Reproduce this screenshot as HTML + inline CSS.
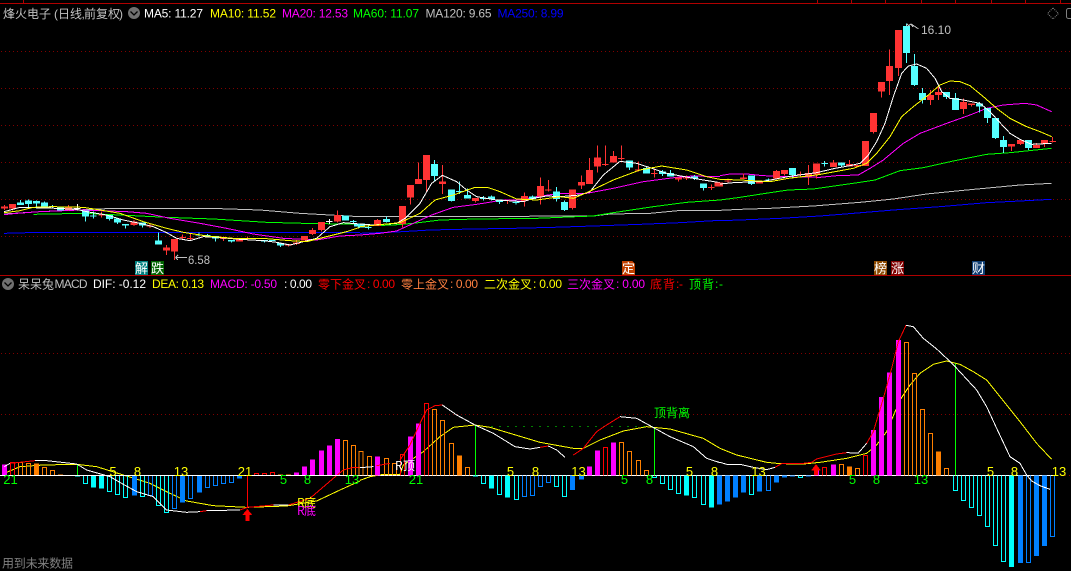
<!DOCTYPE html>
<html><head><meta charset="utf-8"><title>烽火电子</title>
<style>
html,body{margin:0;padding:0;background:#000;width:1071px;height:571px;overflow:hidden}
svg{display:block}
text{font-family:"Liberation Sans","WenQuanYi Zen Hei","Noto Sans CJK SC",sans-serif;font-size:12px}
.c{font-family:"WenQuanYi Zen Hei","Noto Sans CJK SC",sans-serif;font-size:12px}
.k{font-family:"WenQuanYi Zen Hei","Noto Sans CJK SC",sans-serif;font-size:13px}
.n{font-size:13px;text-anchor:middle}
path,polyline{fill:none;shape-rendering:crispEdges}
polyline{stroke-width:3}
.r{stroke:#ff3333}.y{stroke:#5ff}
.b{stroke-width:21}.w{stroke-width:3}
.f{stroke-width:15}.h{stroke-width:3}
</style></head><body>
<svg width="1071" height="571" viewBox="0 0 1071 571" xmlns="http://www.w3.org/2000/svg">
<defs><pattern id="d" width="4" height="1" patternUnits="userSpaceOnUse"><rect x="1" width="1" height="1" fill="#800000"/></pattern></defs>
<rect width="1071" height="571" fill="#000"/>
<!-- borders -->
<g fill="#b00000">
<rect x="0" y="3" width="1071" height="1"/><rect x="0" y="275" width="1071" height="1"/>
<rect x="23" y="0" width="1" height="3"/><rect x="817" y="0" width="1" height="3"/><rect x="851" y="0" width="1" height="3"/><rect x="885" y="0" width="1" height="3"/><rect x="921" y="0" width="1" height="3"/><rect x="955" y="0" width="1" height="3"/><rect x="991" y="0" width="1" height="3"/><rect x="1025" y="0" width="1" height="3"/><rect x="1060" y="0" width="1" height="3"/>
</g>
<!-- grid -->
<g fill="url(#d)">
<rect y="51" width="1071" height="1"/><rect y="88" width="1071" height="1"/><rect y="125" width="1071" height="1"/><rect y="162" width="1071" height="1"/><rect y="199" width="1071" height="1"/><rect y="236" width="1071" height="1"/><rect y="353" width="1071" height="1"/><rect y="414" width="1071" height="1"/><rect x="1053" y="475" width="18" height="1"/>
</g>

<!-- upper panel part 1 -->
<g transform="scale(.33333)">
<polyline stroke="#0000ff" points="12,700 120,697 1080,697"/>
<polyline stroke="#c0c0c0" points="12,642 120,635 320,626 660,626 780,630 900,640 1080,650"/>
<polyline stroke="#00ff00" points="100,643 250,640 360,645 500,652 640,657 800,667 950,671 1080,672"/>
<polyline stroke="#ff00ff" points="12,644 50,640 120,635 240,630 300,632 380,635 440,640 510,655 600,670 680,685 760,702 850,715 950,720 1020,708 1080,705"/>
<path class="w r" d="M13 615V630M37 612V632M205 615V632M305 635V652M402 660V678M450 670V684M500 735V765M523 717V780M548 703V720M571 700V720M670 710V723M742 710V722M865 732V740M889 720V735M937 684V705M964 666V695M1012 632V668M295 645h20M440 678h20M490 748h20M538 712h20M561 715h20M660 716h20M732 716h20"/>
<path class="b r" d="M13 620V626M37 612V625M205 622V630M402 665V675M500 742V752M523 717V755M718 718V725M865 732V737M889 728V732M913 708V722M937 690V702M964 666V690M1012 645V665"/>
<path class="w y" d="M61 600V615M85 598V625M109 601V625M133 605V625M157 615V625M257 632V665M280 635V655M328 645V662M352 654V672M376 672V686M428 668V682M475 698V734M597 698V710M622 702V712M647 708V724M694 720V728M793 720V728M841 729V741M1060 660V672M147 620h20M270 648h20M587 705h20M612 707h20M807 722h20M1050 665h20"/>
<path class="b y" d="M61 608V615M85 602V612M109 603V610M133 608V622M181 620V632M257 632V650M328 645V657M352 656V668M376 672V677M428 668V677M475 722V734M647 708V716M694 720V725M793 720V724M841 729V737M1036 646V662M1072 670V680"/>
<path class="w" stroke="#fff" d="M232 612V632M222 626h20M988 657V672M978 665h20"/>
<polyline stroke="#fff" points="12,635 60,622 100,623 170,625 230,628 260,635 320,645 370,660 420,670 460,680 500,698 530,715 570,722 610,710 650,712 720,718 790,722 830,727 870,735 910,725 950,715 990,680 1030,668 1080,672"/>
<polyline stroke="#ffff00" points="12,638 60,632 100,622 160,620 250,622 300,630 360,640 430,665 500,685 550,697 620,708 700,715 800,716 870,722 920,725 980,710 1040,695 1080,682"/>
</g>

<!-- upper panel part 2 -->
<g transform="translate(360,0) scale(.33333)">
<polyline stroke="#0000ff" points="0,700 110,696 210,690 340,687 460,685 580,682 700,678 840,673 960,668 1080,661"/>
<polyline stroke="#c0c0c0" points="0,650 200,650 700,648 750,642 870,640 965,631 1080,631"/>
<polyline stroke="#00ff00" points="0,678 100,675 160,670 240,660 350,657 530,655 650,650 700,648 760,638 880,620 980,607 1080,600"/>
<polyline stroke="#ff00ff" points="0,705 60,700 110,693 160,670 215,645 280,622 350,613 430,600 480,600 530,590 600,580 680,580 760,565 850,545 950,532 1000,528 1080,530"/>
<path class="w r" d="M52 657V678M128 618V682M151 555V614M175 487V552M199 465V578M247 495V582M346 594V608M442 602V612M493 578V620M541 532V614M565 540V575M637 568V628M664 526V567M688 474V552M712 436V518M736 436V498M760 453V488M784 436V482M835 485V515M883 505V533M955 532V544M979 526V540M1054 553V570M432 602h20M555 570h20M726 494h20M774 476h20M825 510h20M873 520h20M969 534h20M1044 562h20"/>
<path class="b r" d="M52 660V678M128 618V672M151 555V593M175 537V552M199 465V540M247 545V552M346 594V603M493 588V603M541 558V590M637 568V624M664 546V557M688 510V552M712 472V500M760 468V488M955 532V538M1074 548V560"/>
<path class="w y" d="M25 675V688M80 650V668M223 480V545M274 568V605M298 545V582M322 565V595M370 588V602M394 586V602M418 598V612M468 600V613M517 586V600M589 561V605M613 602V633M808 481V510M859 500V521M907 510V528M931 510V530M1003 525V540M1030 550V572M15 682h20M288 575h20M360 595h20M458 608h20"/>
<path class="b y" d="M5 670V682M80 657V666M223 492V528M274 568V603M322 585V595M394 590V597M418 598V606M517 590V597M589 574V597M613 606V630M808 481V503M859 504V521M907 514V522M931 519V530M1003 530V536M1030 550V564"/>
<polyline stroke="#fff" points="0,672 40,675 110,670 135,655 180,610 215,550 247,526 290,545 320,570 350,590 410,600 490,605 520,595 560,588 600,590 660,585 690,575 730,525 780,484 830,490 870,503 920,520 1000,535 1080,548"/>
<polyline stroke="#ffff00" points="0,680 50,675 120,668 180,640 225,600 280,585 345,562 385,563 420,575 470,597 530,600 600,590 640,595 680,578 760,540 840,510 905,498 980,510 1040,530 1080,538"/>
</g>

<!-- upper panel part 3 -->
<g transform="translate(720,0) scale(.33333)">
<polyline stroke="#0000ff" points="0,662 60,660 180,655 300,648 400,640 520,630 660,620 800,608 900,603 995,598"/>
<polyline stroke="#c0c0c0" points="0,631 60,628 150,625 280,618 420,607 520,597 620,582 740,570 900,555 995,550"/>
<polyline stroke="#00ff00" points="0,600 60,592 150,578 205,570 280,567 350,557 420,547 465,540 540,512 610,503 700,483 800,463 870,458 995,445"/>
<polyline stroke="#ff00ff" points="0,527 30,522 80,522 130,527 210,530 300,532 350,527 415,525 450,505 490,480 550,430 600,400 680,370 750,345 800,325 850,315 915,310 950,315 995,335"/>
<path class="w r" d="M24 535V550M14 543h20M70 520V537M170 510V535M194 510V526M242 515V530M232 523h20M266 495V555M290 491V535M340 480V501M388 480V500M460 339V401M484 246V293M508 148V285M536 90V228M632 270V315M656 255V300M731 296V342M755 310V320M875 432V453M902 420V435M950 429V444M974 420V441M998 411V427M988 425h20"/>
<path class="b r" d="M-2 548V560M70 532V537M118 543V551M170 513V535M194 510V522M266 519V530M290 491V523M340 487V501M388 492V500M412 495V500M436 423V498M460 339V396M484 246V275M508 198V243M536 90V204M632 285V300M656 276V285M731 306V327M755 310V315M875 432V440M902 420V432M950 435V444M974 420V430"/>
<path class="w y" d="M94 527V555M218 504V535M314 483V500M304 491h20M364 487V503M560 70V189M584 162V258M608 264V310M680 276V297M707 279V330M779 306V338M803 324V369M827 354V417M851 408V459M926 420V450M146 535V545M136 540h20"/>
<path class="b y" d="M94 527V552M218 504V525M364 487V497M560 78V159M584 198V255M608 279V300M680 276V291M707 294V330M779 310V320M803 324V354M827 354V414M851 420V441M926 420V444"/>
<polyline stroke="#fff" points="0,552 40,548 130,544 215,528 290,518 345,505 390,497 420,490 445,465 470,425 495,370 520,290 545,220 565,198 590,192 620,205 645,235 665,275 690,295 730,300 780,310 810,335 840,368 870,400 900,418 935,433 995,430"/>
<polyline stroke="#ffff00" points="0,538 60,540 150,545 205,535 290,525 345,515 400,505 440,490 470,460 510,410 545,350 580,320 625,285 660,255 690,243 720,245 750,257 790,290 830,325 870,355 920,380 960,395 995,410"/>
</g>

<!-- price labels -->
<g stroke="#c0c0c0" fill="none" style="stroke-width:1">
<path d="M175.5 257.5L178 255M175.5 257.5L178 260M176 257.5H187"/>
<path d="M908 26L911 24 914 26 918 28.5H918.5"/>
<path d="M908 24L906 26M911 24L913 27"/>
</g>
<text x="188" y="264" fill="#c0c0c0" textLength="22" lengthAdjust="spacingAndGlyphs">6.58</text>
<text x="921" y="34" fill="#c0c0c0" textLength="30" lengthAdjust="spacingAndGlyphs">16.10</text>

<!-- chips -->
<rect x="135" y="261" width="13" height="14" fill="#008080"/><text class="k" x="135" y="273" fill="#fff">解</text>
<rect x="151" y="261" width="13" height="14" fill="#006400"/><text class="k" x="151" y="273" fill="#fff">跌</text>
<path d="M622 261H632L635 264V275H622Z" style="fill:#c04000;stroke:none"/><text class="k" x="622" y="273" fill="#fff">定</text>
<rect x="874" y="261" width="13" height="14" fill="#8c4a00"/><text class="k" x="874" y="273" fill="#fff">榜</text>
<rect x="891" y="261" width="13" height="14" fill="#800000"/><text class="k" x="891" y="273" fill="#fff">涨</text>
<rect x="972" y="261" width="13" height="14" fill="#103f73"/><text class="k" x="972" y="273" fill="#fff">财</text>

<!-- upper header -->
<text y="18" fill="#c0c0c0"><tspan class="c" x="3">烽火电子</tspan><tspan x="54">(</tspan><tspan class="c" x="58">日线</tspan><tspan x="81.5">,</tspan><tspan class="c" x="84">前复权</tspan><tspan x="119">)</tspan></text>
<circle cx="134" cy="13" r="6" fill="#707070"/><path d="M130.5 11.5L134 15 137.5 11.5" stroke="#000" style="fill:none;stroke-width:1.3;shape-rendering:auto"/>
<text x="144" y="17.5" fill="#fff" textLength="59">MA5: 11.27</text>
<text x="210" y="17.5" fill="#ffff00" textLength="66">MA10: 11.52</text>
<text x="282" y="17.5" fill="#ff00ff" textLength="66">MA20: 12.53</text>
<text x="353" y="17.5" fill="#00ff00" textLength="66">MA60: 11.07</text>
<text x="425.5" y="17.5" fill="#c0c0c0" textLength="66">MA120: 9.65</text>
<text x="497.5" y="17.5" fill="#0000ff" textLength="66">MA250: 8.99</text>
<path d="M1053 8L1058.5 13.5 1053 19 1047.5 13.5Z" stroke="#808080" stroke-dasharray="1 1" style="stroke-width:1;shape-rendering:auto"/>
<rect x="1066.5" y="8.5" width="10" height="10" rx="2" stroke="#808080" fill="none"/>

<!-- lower header -->
<circle cx="8" cy="284" r="6" fill="#707070"/><path d="M4.5 282.5L8 286 11.5 282.5" stroke="#000" style="fill:none;stroke-width:1.3;shape-rendering:auto"/>
<text class="c" x="18" y="288.5" fill="#c0c0c0" textLength="36">呆呆兔</text>
<text x="54.5" y="288" fill="#c0c0c0" textLength="33">MACD</text>
<text x="93" y="288" fill="#fff" textLength="53">DIF: -0.12</text>
<text x="152" y="288" fill="#ffff00" textLength="52">DEA: 0.13</text>
<text x="210" y="288" fill="#ff00ff" textLength="67">MACD: -0.50</text>
<text x="284" y="288" fill="#fff" textLength="28">: 0.00</text>
<text class="c" x="318" y="288.5" fill="#ff0000" textLength="48">零下金叉</text><text x="367" y="288" fill="#ff0000" textLength="28">: 0.00</text>
<text class="c" x="401" y="288.5" fill="#ff8040" textLength="48">零上金叉</text><text x="450" y="288" fill="#ff8040" textLength="28">: 0.00</text>
<text class="c" x="484" y="288.5" fill="#ffff00" textLength="48">二次金叉</text><text x="533" y="288" fill="#ffff00" textLength="29">: 0.00</text>
<text class="c" x="567" y="288.5" fill="#ff00ff" textLength="48">三次金叉</text><text x="616" y="288" fill="#ff00ff" textLength="29">: 0.00</text>
<text class="c" x="650" y="288.5" fill="#ff0000" textLength="25">底背</text><text x="676" y="288" fill="#ff0000" textLength="7">: -</text>
<text class="c" x="689" y="288.5" fill="#00ff00" textLength="25">顶背</text><text x="715" y="288" fill="#00ff00" textLength="8">: -</text>

<!-- MACD panel part 1 -->
<g transform="translate(0,275) scale(.33333)">
<polyline stroke="#ffff00" points="13,595 60,575 130,570 230,568 290,575 370,600 450,625 510,655 560,678 640,692 740,697 860,693 950,678 1020,645 1080,618"/>
<path class="f" stroke="#ff00ff" d="M13 601V568M889 601V592M913 601V574M937 601V553M964 601V526M988 601V511M1012 601V492"/>
<path class="h" stroke="#ff0000" d="M31 601V562h12V601M763 601V595h12V601M787 601V595h12V601M811 601V592h12V601M742 601V698"/>
<path class="h" stroke="#ff8000" d="M55 601V562h12V601M79 601V565h12V601M127 601V577h12V601M151 601V586h12V601M1030 601V496h12V601M1054 601V511h12V601"/>
<path class="f" stroke="#ff8000" d="M109 601V565M181 601V598M841 601V598M865 601V598"/>
<path class="h" stroke="#00ffff" d="M250 601V626h12V601M322 601V650h12V601M346 601V659h12V601M370 601V668h12V601M421 601V665h12V601M469 601V692h12V601M493 601V713h12V601"/>
<path class="f" stroke="#00ffff" d="M232 601V605M280 601V638M304 601V641"/>
<path class="h" stroke="#0080ff" d="M445 601V662h12V601M517 601V701h12V601M565 601V671h12V601M616 601V638h12V601M640 601V632h12V601M664 601V626h12V601M688 601V623h12V601"/>
<path class="f" stroke="#0080ff" d="M403 601V662M547 601V683M598 601V653M718 601V611"/>
<path class="h" stroke="#00ff00" d="M232 601V568"/>
<polyline stroke="#fff" points="13,575 30,565"/>
<polyline stroke="#ff0000" points="30,565 60,562 105,557"/>
<polyline stroke="#fff" points="105,557 140,557 230,567 260,585 330,605 370,628 410,650 460,665 500,705 560,712 600,710"/>
<polyline stroke="#ff0000" points="600,710 620,707"/>
<polyline stroke="#fff" points="620,707 720,705"/>
<polyline stroke="#ff0000" points="720,705 742,697 820,690"/>
<polyline stroke="#fff" points="820,690 865,690"/>
<polyline stroke="#ff0000" points="865,690 930,670 1000,610 1030,585 1060,577 1080,577"/>
<path d="M742 702L757 720H748V738H736V720H727Z" style="fill:#ff0000;stroke:none"/>
</g>
<rect x="0" y="475" width="1053" height="1" fill="#fff"/>

<!-- MACD panel part 2 -->
<g transform="translate(360,275) scale(.33333)">
<polyline stroke="#ffff00" points="0,616 30,605 70,598 120,598 130,570 190,530 240,485 280,457 345,450 390,457 450,475 540,502 640,520 670,520 720,495 790,468 860,455 930,462 1030,490 1080,520"/>
<path class="f" stroke="#ff00ff" d="M52 601V544M151 601V484M175 601V445M688 601V574M712 601V526M760 601V502"/>
<path class="h" stroke="#ff0000" d="M121 601V538h12V601M193 601V385h12V601M730 601V517h12V601"/>
<path class="h" stroke="#ff8000" d="M-3 601V529h12V601M22 601V544h12V601M73 601V550h12V601M97 601V565h12V601M217 601V403h12V601M241 601V436h12V601M268 601V505h12V601M316 601V577h12V601M778 601V502h12V601M802 601V529h12V601M829 601V556h12V601M853 601V586h12V601"/>
<path class="f" stroke="#ff8000" d="M298 601V541"/>
<path class="h" stroke="#00ffff" d="M364 601V626h12V601M412 601V659h12V601M463 601V674h12V601M583 601V635h12V601M607 601V665h12V601M877 601V607h12V601M901 601V626h12V601M925 601V644h12V601M949 601V656h12V601M997 601V668h12V601M1024 601V689h12V601"/>
<path class="f" stroke="#00ffff" d="M346 601V604M394 601V641M442 601V668M979 601V662M1054 601V698"/>
<path class="h" stroke="#0080ff" d="M487 601V665h12V601M511 601V662h12V601M535 601V635h12V601M559 601V623h12V601"/>
<path class="f" stroke="#0080ff" d="M637 601V645M664 601V614M1078 601V689"/>
<path class="h" stroke="#00ff00" d="M346 601V452M883 601V457"/>
<path stroke="#00ff00" stroke-dasharray="3 21" class="h" d="M395 454H880"/>
<polyline stroke="#fff" points="0,578 40,575"/>
<polyline stroke="#ff0000" points="50,572 90,565"/>
<polyline stroke="#ff0000" points="120,555 150,510 180,445 200,405 225,392 247,390"/>
<polyline stroke="#fff" points="247,390 290,420 345,450 400,475 465,515 510,522 540,517"/>
<polyline stroke="#ff0000" points="540,517 565,513"/>
<polyline stroke="#fff" points="565,513 590,525 615,547"/>
<polyline stroke="#ff0000" points="640,540 670,520 710,470 740,450 780,425"/>
<polyline stroke="#fff" points="780,425 830,430 870,452 930,485 1000,515 1040,550 1080,563"/>
</g>

<!-- MACD panel part 3 -->
<g transform="translate(720,275) scale(.33333)">
<polyline stroke="#ffff00" points="0,520 50,540 140,562 180,566 250,567 300,562 380,550 440,535 470,510 500,470 540,375 570,330 600,295 640,268 680,258 720,268 760,290 800,315 840,365 900,440 950,505 995,553"/>
<path class="f" stroke="#ff00ff" d="M289 601V580M340 601V568M460 601V465M484 601V366M508 601V292M535 601V195"/>
<path class="h" stroke="#ff0000" d="M307 601V577h12V601M430 601V541h12V601"/>
<path class="h" stroke="#ff8000" d="M358 601V568h12V601M406 601V580h12V601M553 601V202h12V601M577 601V295h12V601M601 601V403h12V601M625 601V475h12V601M673 601V580h12V601"/>
<path class="f" stroke="#ff8000" d="M388 601V574M655 601V529"/>
<path class="h" stroke="#00ffff" d="M88 601V659h12V601M235 601V608h12V601M700 601V647h12V601M724 601V677h12V601M748 601V698h12V601M772 601V722h12V601M796 601V755h12V601M820 601V812h12V601M844 601V860h12V601"/>
<path class="f" stroke="#00ffff" d="M874 601V876"/>
<path class="h" stroke="#0080ff" d="M139 601V647h12V601M919 601V863h12V601M991 601V785h12V601"/>
<path class="f" stroke="#0080ff" d="M22 601V680M46 601V668M70 601V653M118 601V650M169 601V623M193 601V608M217 601V605M265 601V605M901 601V864M949 601V843M973 601V813M-2 601V689"/>
<path class="h" stroke="#00ff00" d="M706 601V265"/>
<polyline stroke="#fff" points="0,562 20,568 60,568 100,577 140,584 165,577"/>
<polyline stroke="#ff0000" points="165,577 185,566 215,565 250,565 275,562 290,552 350,537 380,533"/>
<polyline stroke="#fff" points="380,533 415,534 440,505"/>
<polyline stroke="#ff0000" points="440,505 460,470 490,370 515,280 535,200 558,151"/>
<polyline stroke="#fff" points="558,151 580,155 610,190 650,222 680,250 710,280 770,345 800,395 830,460 870,545 900,565 920,600 935,618 960,632 990,643"/>
<path d="M288 567L303 587H294V600H282V587H273Z" style="fill:#ff0000;stroke:none"/>
</g>

<!-- MACD numbers -->
<g fill="#ffff00">
<text class="n" x="113" y="476">5</text><text class="n" x="137.5" y="476">8</text><text class="n" x="181" y="476">13</text><text class="n" x="245" y="476">21</text>
<text class="n" x="510.5" y="476">5</text><text class="n" x="535.5" y="476">8</text><text class="n" x="578.5" y="476">13</text>
<text class="n" x="689.5" y="476">5</text><text class="n" x="714.5" y="476">8</text>
<text class="n" x="758.5" y="476">13</text><text class="n" x="990.5" y="476">5</text><text class="n" x="1014.5" y="476">8</text><text class="n" x="1059" y="476">13</text>
</g>
<g fill="#00ff00">
<text class="n" x="10.5" y="484">21</text><text class="n" x="283.5" y="484">5</text><text class="n" x="307.5" y="484">8</text><text class="n" x="352" y="484">13</text>
<text class="n" x="416" y="484">21</text><text class="n" x="624.5" y="484">5</text><text class="n" x="649.5" y="484">8</text>
<text class="n" x="852.5" y="484">5</text><text class="n" x="876.5" y="484">8</text><text class="n" x="921" y="484">13</text>
</g>
<text class="c" x="297" y="507" fill="#ffff00" textLength="19">R底</text>
<text class="c" x="297" y="515" fill="#ff00ff" textLength="19">R底</text>
<text class="c" x="395" y="470" fill="#fff" textLength="20">R顶</text>
<text class="c" x="654" y="417" fill="#00ff00" textLength="36">顶背离</text>
<text class="c" x="2" y="567.5" fill="#808080" textLength="71">用到未来数据</text>
</svg>
</body></html>
